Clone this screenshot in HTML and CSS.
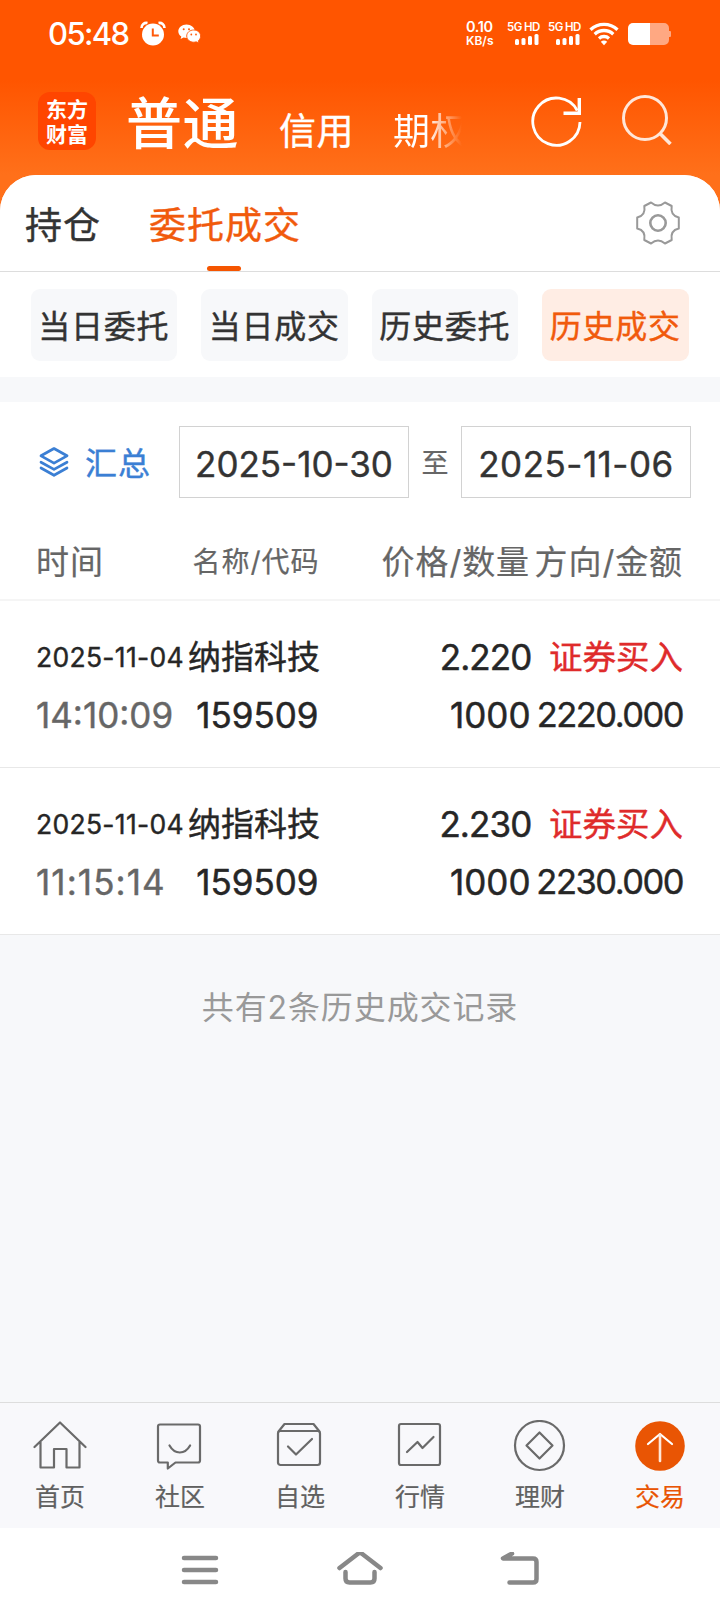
FILE: index.html
```html
<!DOCTYPE html>
<html lang="zh-CN">
<head>
<meta charset="utf-8">
<title>历史成交</title>
<link rel="stylesheet" href="styles.css">
</head>
<body>
<div class="screen">
  <header class="top">
    <div class="status">
      <span class="clock">05:48</span>
      <svg class="alarm" width="26" height="26" viewBox="0 0 26 26"><circle cx="13" cy="13.5" r="11" fill="#fff"/><path d="M1.500 7a5 5 0 0 1 6-5M24.500 7a5 5 0 0 0-6-5" fill="none" stroke="#fff" stroke-width="2.600"/><path d="M12.800 7.500v7h6" fill="none" stroke="#ff5a0a" stroke-width="2"/></svg>
      <svg class="wechat" width="24" height="20" viewBox="0 0 24 20"><path d="M8.500.5C4 .5.3 3.500.3 7.300c0 2.200 1.100 4 3 5.300l-.7 2.400 3-1.500c1 .3 1.900.4 2.900.4 4.600 0 8.300-3 8.300-6.700S13 .5 8.500.5z" fill="#fff"/><path d="M15.700 6c-4 0-7 2.700-7 6s3 6.200 7 6.200c.9 0 1.700-.1 2.500-.4l2.600 1.300-.6-2.200c1.500-1.200 2.400-2.900 2.400-4.900 0-3.300-3-6-6.900-6z" fill="#fff" stroke="#ff5a0a" stroke-width=".9"/><g fill="#ff5a0a"><circle cx="5.700" cy="5.200" r="1"/><circle cx="11" cy="5.200" r="1"/><circle cx="13.300" cy="10.500" r=".9"/><circle cx="18" cy="10.500" r=".9"/></g></svg>
      <div class="speed"><span class="speed-num">0.10</span><span class="speed-unit">KB/s</span></div>
      <div class="sim"><span>5G HD</span><svg width="24" height="11" viewBox="0 0 24 11" fill="#fff"><rect x="0" y="5" width="4" height="6" rx="1.500"/><rect x="6.500" y="4" width="4" height="7" rx="1.500"/><rect x="13" y="2" width="4" height="9" rx="1.500"/><rect x="19.500" y="0" width="4" height="11" rx="1.500"/></svg></div>
      <div class="sim"><span>5G HD</span><svg width="24" height="11" viewBox="0 0 24 11" fill="#fff"><rect x="0" y="5" width="4" height="6" rx="1.500"/><rect x="6.500" y="4" width="4" height="7" rx="1.500"/><rect x="13" y="2" width="4" height="9" rx="1.500"/><rect x="19.500" y="0" width="4" height="11" rx="1.500"/></svg></div>
      <svg class="wifi" width="30" height="24" viewBox="0 0 30 24" fill="none" stroke="#fff" stroke-width="3.300"><path d="M1.500 7.800a19.500 19.500 0 0 1 27 0"/><path d="M5.700 12.200a13.500 13.500 0 0 1 18.600 0"/><path d="M10 16.400a7.500 7.500 0 0 1 10 0"/><path d="M11.800 19.800q3.200-2.600 6.400 0L15 23.300z" fill="#fff" stroke="none"/></svg>
      <svg class="battery" width="44" height="22" viewBox="0 0 44 22"><path d="M22 0h14a5 5 0 0 1 5 5v3h1q1 0 1 1v4q0 1-1 1h-1v3a5 5 0 0 1-5 5H22z" fill="#ffa882"/><path d="M22 0v22H5a5 5 0 0 1-5-5V5a5 5 0 0 1 5-5z" fill="#fff"/></svg>
    </div>
    <div class="brandbar">
      <div class="logo"><span>东方</span><span>财富</span></div>
      <span class="mode mode-main">普通</span>
      <span class="mode mode-credit">信用</span>
      <span class="mode mode-option">期权</span>
      <svg class="refresh" width="52" height="52" viewBox="0 0 52 52" fill="none" stroke="#fff" stroke-width="2.800"><path d="M50 27A23.600 23.600 0 1 1 47.200 15.500"/><path d="M49.300 3v15.200H33.500" stroke-width="3.400"/></svg>
      <svg class="search" width="50" height="50" viewBox="0 0 50 50" fill="none" stroke="#ffe6d8" stroke-width="3"><circle cx="23" cy="23" r="21.500"/><path d="M38 38.500 48.500 49" stroke-width="3.600"/></svg>
    </div>
  </header>
  <main class="panel">
    <nav class="tabs">
      <span class="tab tab-hold">持仓</span>
      <span class="tab tab-orders">委托成交</span>
      <svg class="gear" width="46" height="44" viewBox="-23 -22 46 44" fill="none" stroke="#999" stroke-width="2"><path d="M-7-20.500Q0-14.500 7-20.500L13.700-17Q12-7.500 20.800-5.500V5.500Q12 7.500 13.700 17L7 20.500Q0 14.500-7 20.500L-13.700 17Q-12 7.500-20.800 5.500V-5.500Q-12-7.500-13.700-17Z" stroke-linejoin="round"/><circle r="7.700" stroke-width="2.600"/></svg>
    </nav>
    <div class="filters">
      <span class="filter">当日委托</span>
      <span class="filter">当日成交</span>
      <span class="filter">历史委托</span>
      <span class="filter filter-on">历史成交</span>
    </div>
    <div class="divider"></div>
    <div class="range">
      <svg class="layers" width="30" height="30" viewBox="0 0 30 30" fill="none" stroke="#3b7fd4" stroke-width="2.700" stroke-linejoin="round" stroke-linecap="round"><path d="M15 1.500 28 8.800 15 16.200 2 8.800z"/><path d="M2 15.200 15 22.400 28 15.200M2 21 15 28.300 28 21"/></svg>
      <span class="sum">汇总</span>
      <span class="date">2025-10-30</span>
      <span class="to">至</span>
      <span class="date date-end">2025-11-06</span>
    </div>
    <div class="cols heads">
      <span>时间</span><span class="right head-name">名称/代码</span><span class="right">价格/数量</span><span class="right">方向/金额</span>
    </div>
    <div class="cols row">
      <span class="day">2025-11-04</span><span class="right cn">纳指科技</span><span class="right num price">2.220</span><span class="right side">证券买入</span>
      <span class="time">14:10:09</span><span class="right num">159509</span><span class="right num">1000</span><span class="right amount">2220.000</span>
    </div>
    <div class="cols row">
      <span class="day">2025-11-04</span><span class="right cn">纳指科技</span><span class="right num price">2.230</span><span class="right side">证券买入</span>
      <span class="time time-wide">11:15:14</span><span class="right num">159509</span><span class="right num">1000</span><span class="right amount">2230.000</span>
    </div>
    <p class="total">共有2条历史成交记录</p>
  </main>
  <nav class="dock">
    <div class="item"><svg width="54" height="52" viewBox="0 0 54 52"><path d="M1.500 27 27 2.500 52.500 27M7.500 22v25.500H21v-18.500h12.500v18.500H46.500V22"/></svg><span>首页</span></div>
    <div class="item"><svg width="54" height="52" viewBox="0 0 54 52"><path d="M7 4.500h38q2 0 2 2v34q0 2-2 2H22.500L14.800 48.500V42.500H7q-2 0-2-2v-34q0-2 2-2z"/><path d="M16.500 25.500q4 7 10.300 7t10.300-7"/></svg><span>社区</span></div>
    <div class="item"><svg width="54" height="52" viewBox="0 0 54 52"><rect x="5" y="11" width="42" height="34" rx="2.500"/><path d="M5.500 11.500 11.500 4h29L46.500 11.500M15 26.500l8 8L39 19"/></svg><span>自选</span></div>
    <div class="item"><svg width="54" height="52" viewBox="0 0 54 52"><rect x="6" y="4" width="41" height="41" rx="2"/><path d="M14 32l10.500-10 5 6L40.500 17"/></svg><span>行情</span></div>
    <div class="item"><svg width="54" height="52" viewBox="0 0 54 52"><circle cx="26.500" cy="25.500" r="24.500"/><path d="M26.500 12.500l13 13-13 13-13-13z"/></svg><span>理财</span></div>
    <div class="item item-on"><svg width="54" height="52" viewBox="0 0 54 52"><circle cx="27" cy="26" r="24.800" fill="#e95504" stroke="none"/><path d="M15 24 27 14 39 24" stroke="#fff" stroke-width="2.200"/><path d="M27 14.500V41" stroke="#ffe6d8" stroke-width="2.600"/></svg><span>交易</span></div>
  </nav>
  <div class="keys">
    <svg width="40" height="36" viewBox="0 0 40 36"><path d="M4 6h32M4 18h32M4 30h32"/></svg>
    <svg width="48" height="36" viewBox="0 0 48 36"><path d="M3.500 16 22 1.800q2-1.500 4 0L44.500 16M9.500 20v6.500q0 4 4 4h21q4 0 4-4V20"/></svg>
    <svg width="40" height="36" viewBox="0 0 40 36"><path d="M12 1.500 3 6.500H33q3.500 0 3.500 3.500V27q0 3.500-3.500 3.500H9.500"/></svg>
  </div>
</div>
</body>
</html>
```

FILE: styles.css
```css
* { box-sizing: border-box; }
body { margin: 0; font-family: Inter, "Noto Sans CJK SC", sans-serif; color: #262626; }
svg { display: block; flex: none; }
span { white-space: nowrap; -webkit-text-stroke: 0.4px; }
.screen { width: 720px; height: 1612px; display: flex; flex-direction: column; background: linear-gradient(#ff5500 80px, #ff701a 175px); }
.top { height: 175px; flex: none; color: #fff; }

.status { height: 67px; display: flex; align-items: center; padding-left: 48px; }
.status span { -webkit-text-stroke: 0; }
.clock { width: 92px; font-size: 31px; font-weight: 500; letter-spacing: -1.600px; }
.alarm { margin-right: 12px; }
.wechat { margin-right: 264px; }
.speed { width: 41px; display: flex; flex-direction: column; font-weight: 600; gap: 1px; }
.speed-num { font-size: 14.500px; line-height: 14px; letter-spacing: -0.400px; }
.speed-unit { font-size: 12px; line-height: 12px; }
.sim { width: 41px; display: flex; flex-direction: column; align-items: flex-start; gap: 2px; font-size: 11.500px; line-height: 10px; font-weight: 600; letter-spacing: -0.600px; }
.sim svg { margin-left: 8px; }
.wifi { margin-left: 0; }
.battery { margin-left: 9px; }

.brandbar { height: 108px; display: flex; align-items: flex-start; padding: 25px 0 0 38px; }
.logo { width: 58px; height: 58px; flex: none; border-radius: 12px; background: #ff4500; display: flex; flex-direction: column; align-items: center; justify-content: center; font-family: "Noto Sans CJK SC", sans-serif; font-size: 21px; line-height: 25px; font-weight: 700; }
.logo span { -webkit-text-stroke: 0; }
.mode { font-size: 37px; line-height: 44px; margin-top: 18px; letter-spacing: 0.500px; }
.mode-main { font-size: 56px; line-height: 60px; font-weight: 500; letter-spacing: 0.500px; margin: 2px 0 0 30px; width: 153px; -webkit-text-stroke: 0; }
.mode-credit { width: 114px; }
.mode-option { width: 137px; -webkit-text-stroke: 0; color: transparent; background: linear-gradient(90deg, #fff 34px, #ffffff00 69px); background-clip: text; -webkit-background-clip: text; }
.refresh { margin-top: 3px; }
.search { margin: 3px 0 0 40px; }

.panel { flex: 1; background: #f7f8fa; border-radius: 36px 36px 0 0; overflow: hidden; }
.tabs { height: 97px; background: #fff; border-bottom: 1px solid #ddd; display: flex; padding-left: 25px; font-size: 37px; line-height: 102px; letter-spacing: 1px; color: #333; }
.tab-hold { width: 124px; }
.tab-orders { width: 486px; color: #f15a0c; position: relative; }
.tab-orders::after { content: ""; position: absolute; left: 58px; bottom: 0; width: 34px; height: 5px; border-radius: 3px; background: #f55500; }
.gear { margin-top: 26px; }
.filters { height: 105px; background: #fff; display: grid; grid-template-columns: repeat(4, 146.500px); gap: 24px; padding: 17px 0 0 30.500px; }
.filter { height: 72px; border-radius: 9px; background: #f7f8fa; text-align: center; font-size: 32px; line-height: 76px; letter-spacing: 0.700px; color: #333; }
.filter-on { background: #ffede4; color: #f15a0c; }
.divider { height: 25px; }
.range { height: 120px; background: #fff; display: flex; align-items: flex-start; padding: 24px 0 0 39px; line-height: 76px; }
.layers { margin-top: 21px; }
.sum { width: 110px; padding-left: 16px; font-size: 32px; letter-spacing: 1px; color: #3b7fd4; }
.date { width: 230px; height: 72px; border: 1px solid #d2d2d2; text-align: center; font-size: 35px; line-height: 74px; letter-spacing: 0; color: #333; }
.date-end { letter-spacing: 0.500px; }
.to { width: 52px; text-align: center; font-size: 27px; line-height: 76px; color: #666; -webkit-text-stroke: 0.200px; }

.cols { display: grid; grid-template-columns: 154px 128px 212px 153px; padding-left: 36px; background: #fff; }
.right { text-align: right; }
.heads { height: 79px; border-bottom: 2px solid #f5f5f5; font-size: 33px; line-height: 80px; letter-spacing: 0.900px; color: #666; }
.heads span { -webkit-text-stroke: 0.200px; }
.head-name { font-size: 28px; letter-spacing: 1px; margin-right: -1.500px; }
.row { height: 167px; padding-top: 27px; grid-template-rows: 58px 58px; line-height: 58px; border-bottom: 1px solid #e8e8e8; }
.day { font-size: 26.500px; letter-spacing: 0.300px; }
.cn { font-size: 33px; margin-right: 2px; margin-left: -2px; }
.side { font-size: 33.500px; color: #df2b2b; }
.num, .time { font-size: 35px; }
.num { -webkit-text-stroke: 0.500px; margin-right: -0.500px; }
.price { letter-spacing: -0.900px; margin-right: -1.400px; }
.time { color: #666; }
.time-wide { letter-spacing: 1.100px; }
.amount { font-size: 34.500px; letter-spacing: -1.500px; }
.total { margin: 44px 0 0; text-align: center; font-size: 32px; line-height: 58px; letter-spacing: 0.900px; color: #999; }

.dock { height: 126px; flex: none; background: #f8f8fb; border-top: 1px solid #ddd; display: grid; grid-template-columns: repeat(6, 120px); }
.item { display: flex; flex-direction: column; align-items: center; padding-top: 17px; font-size: 25px; line-height: 50px; color: #606060; }
.item span { -webkit-text-stroke: 0.200px; }
.item svg { fill: none; stroke: #6a6a6a; stroke-width: 2.200; stroke-linejoin: round; stroke-linecap: round; }
.item-on { color: #e95504; }
.keys { height: 84px; flex: none; background: #fff; display: flex; align-items: flex-start; justify-content: center; gap: 116px; padding-top: 24px; }
.keys svg { fill: none; stroke: #888; stroke-width: 4.500; stroke-linecap: round; stroke-linejoin: round; }
```
